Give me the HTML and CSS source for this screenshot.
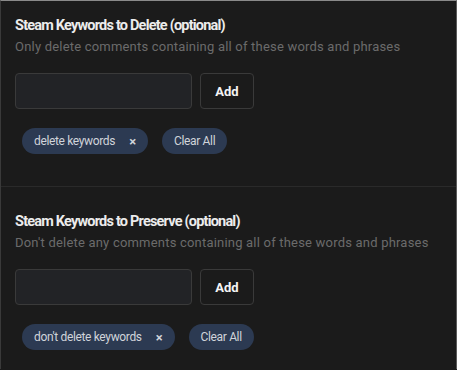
FILE: index.html
```html
<!DOCTYPE html>
<html>
<head>
<meta charset="utf-8">
<link rel="stylesheet" href="styles.css">
</head>
<body>
<div class="panel">
  <section class="section">
    <h3 class="title">Steam Keywords to Delete (optional)</h3>
    <p class="desc">Only delete comments containing all of these words and phrases</p>
    <div class="entry">
      <input class="field" type="text">
      <button class="add">Add</button>
    </div>
    <div class="chips">
      <span class="chip">delete keywords<span class="x">×</span></span>
      <span class="chip clear">Clear All</span>
    </div>
  </section>
  <section class="section">
    <h3 class="title">Steam Keywords to Preserve (optional)</h3>
    <p class="desc">Don't delete any comments containing all of these words and phrases</p>
    <div class="entry">
      <input class="field" type="text">
      <button class="add">Add</button>
    </div>
    <div class="chips">
      <span class="chip">don't delete keywords<span class="x">×</span></span>
      <span class="chip clear">Clear All</span>
    </div>
  </section>
</div>
</body>
</html>
```
FILE: styles.css
```css
html, body {
  margin: 0;
  padding: 0;
  background: #1b1b1b;
}
body {
  font-family: Roboto, "Liberation Sans", sans-serif;
  width: 457px;
  height: 370px;
  overflow: hidden;
}
.panel {
  border-top: 1px solid #8a8a8a;
  border-left: 1px solid #3a3a3a;
  border-right: 1px solid #5a5a5a;
  height: 369px;
  box-sizing: border-box;
}
.section {
  padding: 14px 14px 32px 14px;
}
.section + .section {
  border-top: 1px solid #2a2a2a;
  padding-top: 24px;
}
.title {
  margin: 0;
  font-size: 14.5px;
  font-weight: 700;
  color: #ececec;
  line-height: 21px;
  letter-spacing: -0.8px;
}
.desc {
  margin: 2px 0 0 0;
  font-size: 13px;
  color: #6b6b6b;
  line-height: 18px;
  letter-spacing: 0.2px;
}
.entry {
  display: flex;
  gap: 8px;
  margin-top: 17px;
}
.field {
  width: 177px;
  height: 36px;
  box-sizing: border-box;
  background: #222326;
  border: 1px solid #3a3a3a;
  border-radius: 4px;
  margin: 0;
}
.add {
  width: 54px;
  height: 36px;
  box-sizing: border-box;
  background: #1b1b1b;
  border: 1px solid #3a3a3a;
  border-radius: 4px;
  color: #f5f5f5;
  font-family: Roboto, "Liberation Sans", sans-serif;
  font-weight: 700;
  font-size: 13px;
  margin: 0;
}
.chips {
  display: flex;
  gap: 14px;
  margin-top: 19px;
  padding-left: 7px;
}
.chip {
  display: inline-flex;
  align-items: center;
  height: 26px;
  padding: 0 12px;
  border-radius: 13px;
  background: #2c3a52;
  color: #d0d4da;
  font-size: 12px;
  letter-spacing: -0.35px;
}
.x {
  margin-left: 14px;
  font-weight: 700;
  font-size: 13px;
  letter-spacing: 0;
}
```
